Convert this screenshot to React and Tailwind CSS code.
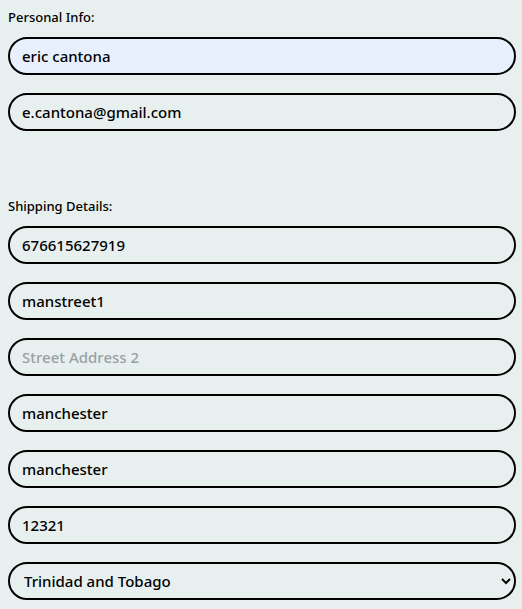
import React from "react";

const inputCls =
  "w-full h-[38px] rounded-[19px] border-2 border-black px-[12px] text-[15px] font-medium text-black placeholder:text-[#9aa0a6] outline-none";

const countries = ["United Kingdom", "France", "Trinidad and Tobago", "United States"];

export default function App() {
  return (
    <div
      className="min-h-[609px] bg-[#e8f0ef] px-2 pt-[8px]"
      style={{ fontFamily: "'Noto Sans', 'Open Sans', sans-serif" }}
    >
      <div className="w-[508px]">
        <section>
          <p className="text-[13px] leading-[18px] font-medium text-black mb-[11px]">Personal Info:</p>
          <div className="flex flex-col gap-[18px]">
            <input autoFocus className={inputCls + " bg-[#e8f0fe]"} defaultValue="eric cantona" />
            <input className={inputCls + " bg-transparent"} defaultValue="e.cantona@gmail.com" />
          </div>
        </section>
        <section className="mt-[66px]">
          <p className="text-[13px] leading-[18px] font-medium text-black mb-[11px]">Shipping Details:</p>
          <div className="flex flex-col gap-[18px]">
            <input className={inputCls + " bg-transparent"} defaultValue="676615627919" />
            <input className={inputCls + " bg-transparent"} defaultValue="manstreet1" />
            <input className={inputCls + " bg-transparent"} placeholder="Street Address 2" />
            <input className={inputCls + " bg-transparent"} defaultValue="manchester" />
            <input className={inputCls + " bg-transparent"} defaultValue="manchester" />
            <input className={inputCls + " bg-transparent"} defaultValue="12321" />
            <select
              defaultValue="Trinidad and Tobago"
              className="w-full h-[38px] rounded-[19px] border-2 border-black pl-[10px] pr-[6px] text-[15px] font-medium text-black bg-transparent outline-none"
            >
              {countries.map((c) => (
                <option key={c} value={c}>
                  {c}
                </option>
              ))}
            </select>
          </div>
        </section>
      </div>
    </div>
  );
}
